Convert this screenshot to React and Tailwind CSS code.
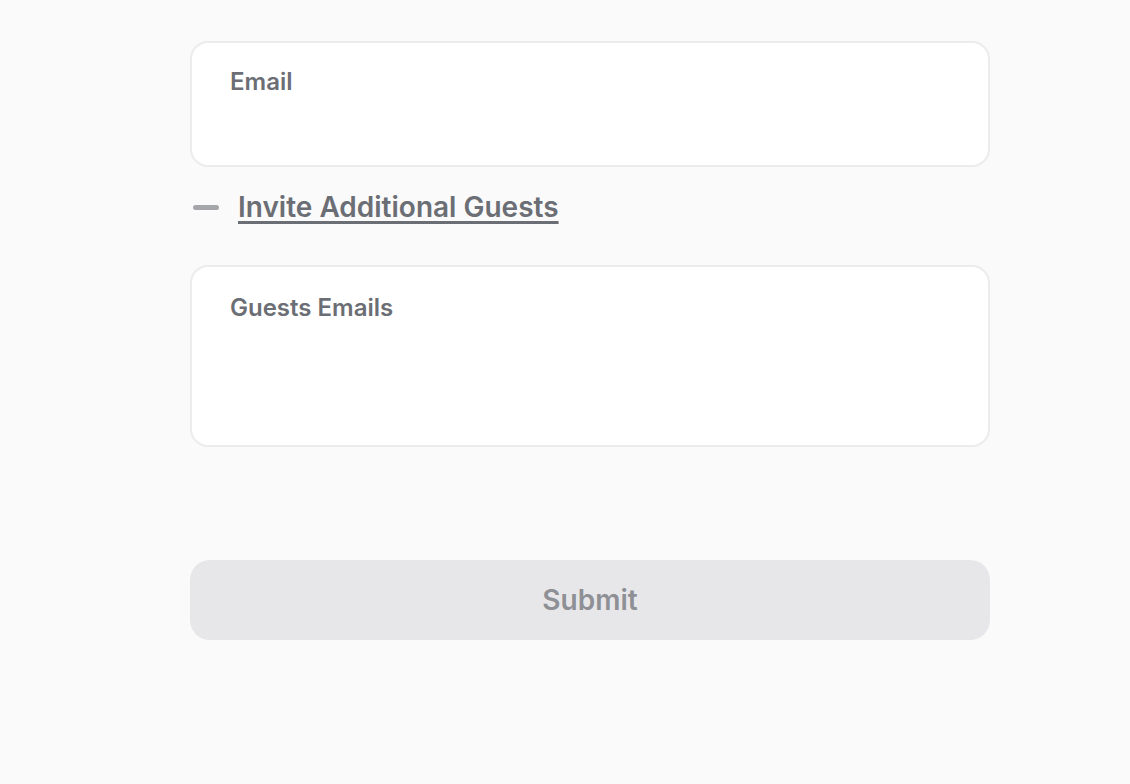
export default function App() {
  return (
    <div
      className="min-h-[784px] bg-[#fafafa]"
      style={{ fontFamily: "Inter, 'Noto Sans', sans-serif" }}
    >
      <form className="ml-[190px] w-[800px] pt-[41px]" onSubmit={(e) => e.preventDefault()}>
        <label className="flex h-[126px] flex-col rounded-[18px] border-2 border-[#ececec] bg-white px-[38px] pt-[24px]">
          <span className="text-[24px] leading-[30px] font-semibold text-[#6b6e74]">Email</span>
          <input type="email" className="mt-2 w-full bg-transparent text-[20px] outline-none" />
        </label>

        <button
          type="button"
          className="mt-[22px] flex h-[36px] items-center gap-[19px] pl-[3px]"
        >
          <span className="h-[5px] w-[26px] rounded-full bg-[#a4a6aa]" />
          <span className="text-[28px] leading-[36px] font-semibold text-[#6b6e74] underline decoration-[3px] underline-offset-[4px]">
            Invite Additional Guests
          </span>
        </button>

        <label className="mt-[40px] flex h-[182px] flex-col rounded-[18px] border-2 border-[#ececec] bg-white px-[38px] pt-[26px]">
          <span className="text-[24px] leading-[30px] font-semibold text-[#6b6e74]">Guests Emails</span>
          <textarea className="mt-2 w-full flex-1 resize-none bg-transparent text-[20px] outline-none" />
        </label>

        <button
          type="submit"
          disabled
          className="mt-[113px] h-[80px] w-full rounded-[20px] bg-[#e7e7e9] text-[28px] font-semibold text-[#8e9095]"
        >
          Submit
        </button>
      </form>
    </div>
  );
}
